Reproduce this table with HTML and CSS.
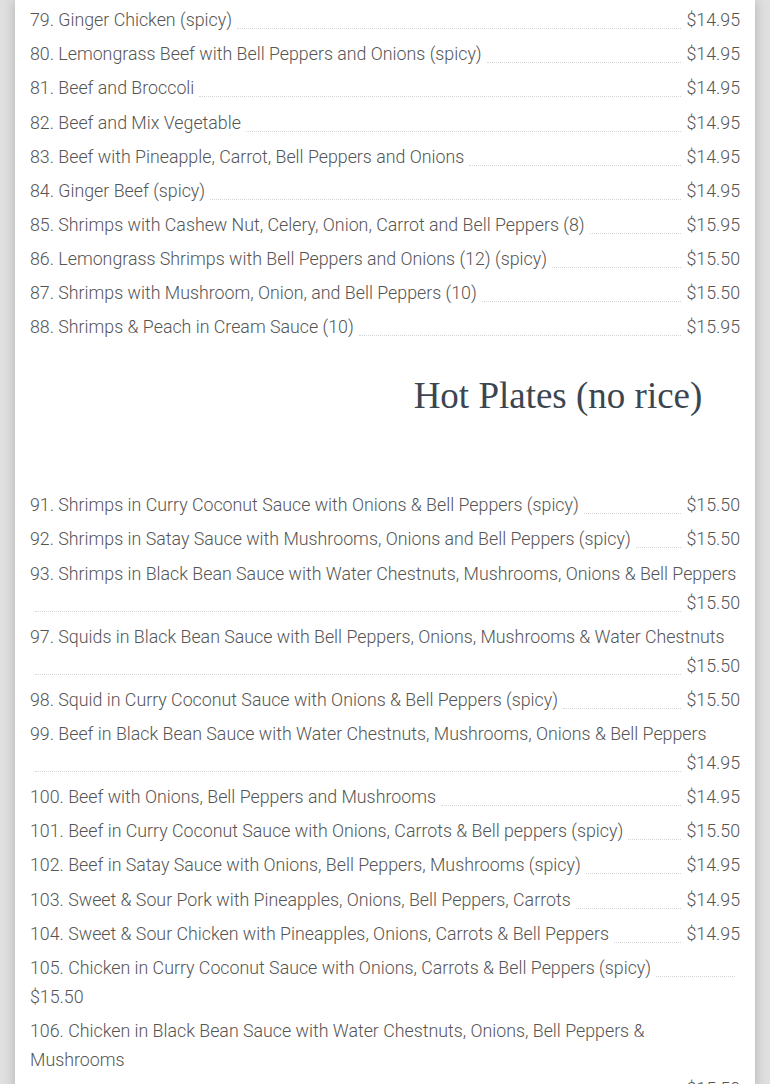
FILE: index.html
```html
<!DOCTYPE html>
<html>
<head>
<meta charset="utf-8">
<link rel="stylesheet" href="styles.css">
</head>
<body>
<div class="card">
  <div class="menu">
    <div class="item"><span class="name">79. Ginger Chicken (spicy)</span><span class="dots"></span><span class="price">$14.95</span></div>
    <div class="item"><span class="name">80. Lemongrass Beef with Bell Peppers and Onions (spicy)</span><span class="dots"></span><span class="price">$14.95</span></div>
    <div class="item"><span class="name">81. Beef and Broccoli</span><span class="dots"></span><span class="price">$14.95</span></div>
    <div class="item"><span class="name">82. Beef and Mix Vegetable</span><span class="dots"></span><span class="price">$14.95</span></div>
    <div class="item"><span class="name">83. Beef with Pineapple, Carrot, Bell Peppers and Onions</span><span class="dots"></span><span class="price">$14.95</span></div>
    <div class="item"><span class="name">84. Ginger Beef (spicy)</span><span class="dots"></span><span class="price">$14.95</span></div>
    <div class="item"><span class="name">85. Shrimps with Cashew Nut, Celery, Onion, Carrot and Bell Peppers (8)</span><span class="dots"></span><span class="price">$15.95</span></div>
    <div class="item"><span class="name">86. Lemongrass Shrimps with Bell Peppers and Onions (12) (spicy)</span><span class="dots"></span><span class="price">$15.50</span></div>
    <div class="item"><span class="name">87. Shrimps with Mushroom, Onion, and Bell Peppers (10)</span><span class="dots"></span><span class="price">$15.50</span></div>
    <div class="item"><span class="name">88. Shrimps &amp; Peach in Cream Sauce (10)</span><span class="dots"></span><span class="price">$15.95</span></div>
  </div>
  <div class="section-head">
    <div></div>
    <h2 class="title">Hot Plates (no rice)</h2>
  </div>
  <div class="menu">
    <div class="item"><span class="name">91. Shrimps in Curry Coconut Sauce with Onions &amp; Bell Peppers (spicy)</span><span class="dots"></span><span class="price">$15.50</span></div>
    <div class="item"><span class="name">92. Shrimps in Satay Sauce with Mushrooms, Onions and Bell Peppers (spicy)</span><span class="dots"></span><span class="price">$15.50</span></div>
    <div class="item"><span class="name">93. Shrimps in Black Bean Sauce with Water Chestnuts, Mushrooms, Onions &amp; Bell Peppers</span><span class="dots"></span><span class="price">$15.50</span></div>
    <div class="item"><span class="name">97. Squids in Black Bean Sauce with Bell Peppers, Onions, Mushrooms &amp; Water Chestnuts</span><span class="dots"></span><span class="price">$15.50</span></div>
    <div class="item"><span class="name">98. Squid in Curry Coconut Sauce with Onions &amp; Bell Peppers (spicy)</span><span class="dots"></span><span class="price">$15.50</span></div>
    <div class="item"><span class="name">99. Beef in Black Bean Sauce with Water Chestnuts, Mushrooms, Onions &amp; Bell Peppers</span><span class="dots"></span><span class="price">$14.95</span></div>
    <div class="item"><span class="name">100. Beef with Onions, Bell Peppers and Mushrooms</span><span class="dots"></span><span class="price">$14.95</span></div>
    <div class="item"><span class="name">101. Beef in Curry Coconut Sauce with Onions, Carrots &amp; Bell peppers (spicy)</span><span class="dots"></span><span class="price">$15.50</span></div>
    <div class="item"><span class="name">102. Beef in Satay Sauce with Onions, Bell Peppers, Mushrooms (spicy)</span><span class="dots"></span><span class="price">$14.95</span></div>
    <div class="item"><span class="name">103. Sweet &amp; Sour Pork with Pineapples, Onions, Bell Peppers, Carrots</span><span class="dots"></span><span class="price">$14.95</span></div>
    <div class="item"><span class="name">104. Sweet &amp; Sour Chicken with Pineapples, Onions, Carrots &amp; Bell Peppers</span><span class="dots"></span><span class="price">$14.95</span></div>
    <div class="item"><span class="name">105. Chicken in Curry Coconut Sauce with Onions, Carrots &amp; Bell Peppers (spicy)</span><span class="dots"></span><span class="price">$15.50</span></div>
    <div class="item"><span class="name">106. Chicken in Black Bean Sauce with Water Chestnuts, Onions, Bell Peppers &amp; Mushrooms</span><span class="dots"></span><span class="price">$15.50</span></div>
  </div>
</div>
</body>
</html>
```
FILE: styles.css
```css
html, body {
  margin: 0;
  padding: 0;
}
body {
  background: #e0e0e0;
  font-family: Roboto, "Liberation Sans", sans-serif;
}
.card {
  margin: 0 15px;
  padding: 0 15px 40px;
  background: #fff;
  box-shadow: 0 0 12px rgba(0, 0, 0, 0.22);
  min-height: 1084px;
  box-sizing: border-box;
}
.item {
  display: flex;
  flex-wrap: wrap;
  padding-top: 5.15px;
  font-weight: 300;
  font-size: 17.8px;
  line-height: 29px;
  color: #555;
}
.dots {
  flex: 1 1 30px;
  margin: 0 5px 5px;
  border-bottom: 1px dotted #d6d6d6;
}
.price {
  white-space: nowrap;
}
.section-head {
  display: grid;
  grid-template-columns: 1fr 1fr;
  padding: 33px 0 66.7px;
}
.title {
  margin: 0;
  padding-right: 9px;
  text-align: center;
  font-family: "Liberation Serif", "Times New Roman", serif;
  font-weight: 400;
  font-size: 37px;
  line-height: 44px;
  color: #3b4650;
}
```
